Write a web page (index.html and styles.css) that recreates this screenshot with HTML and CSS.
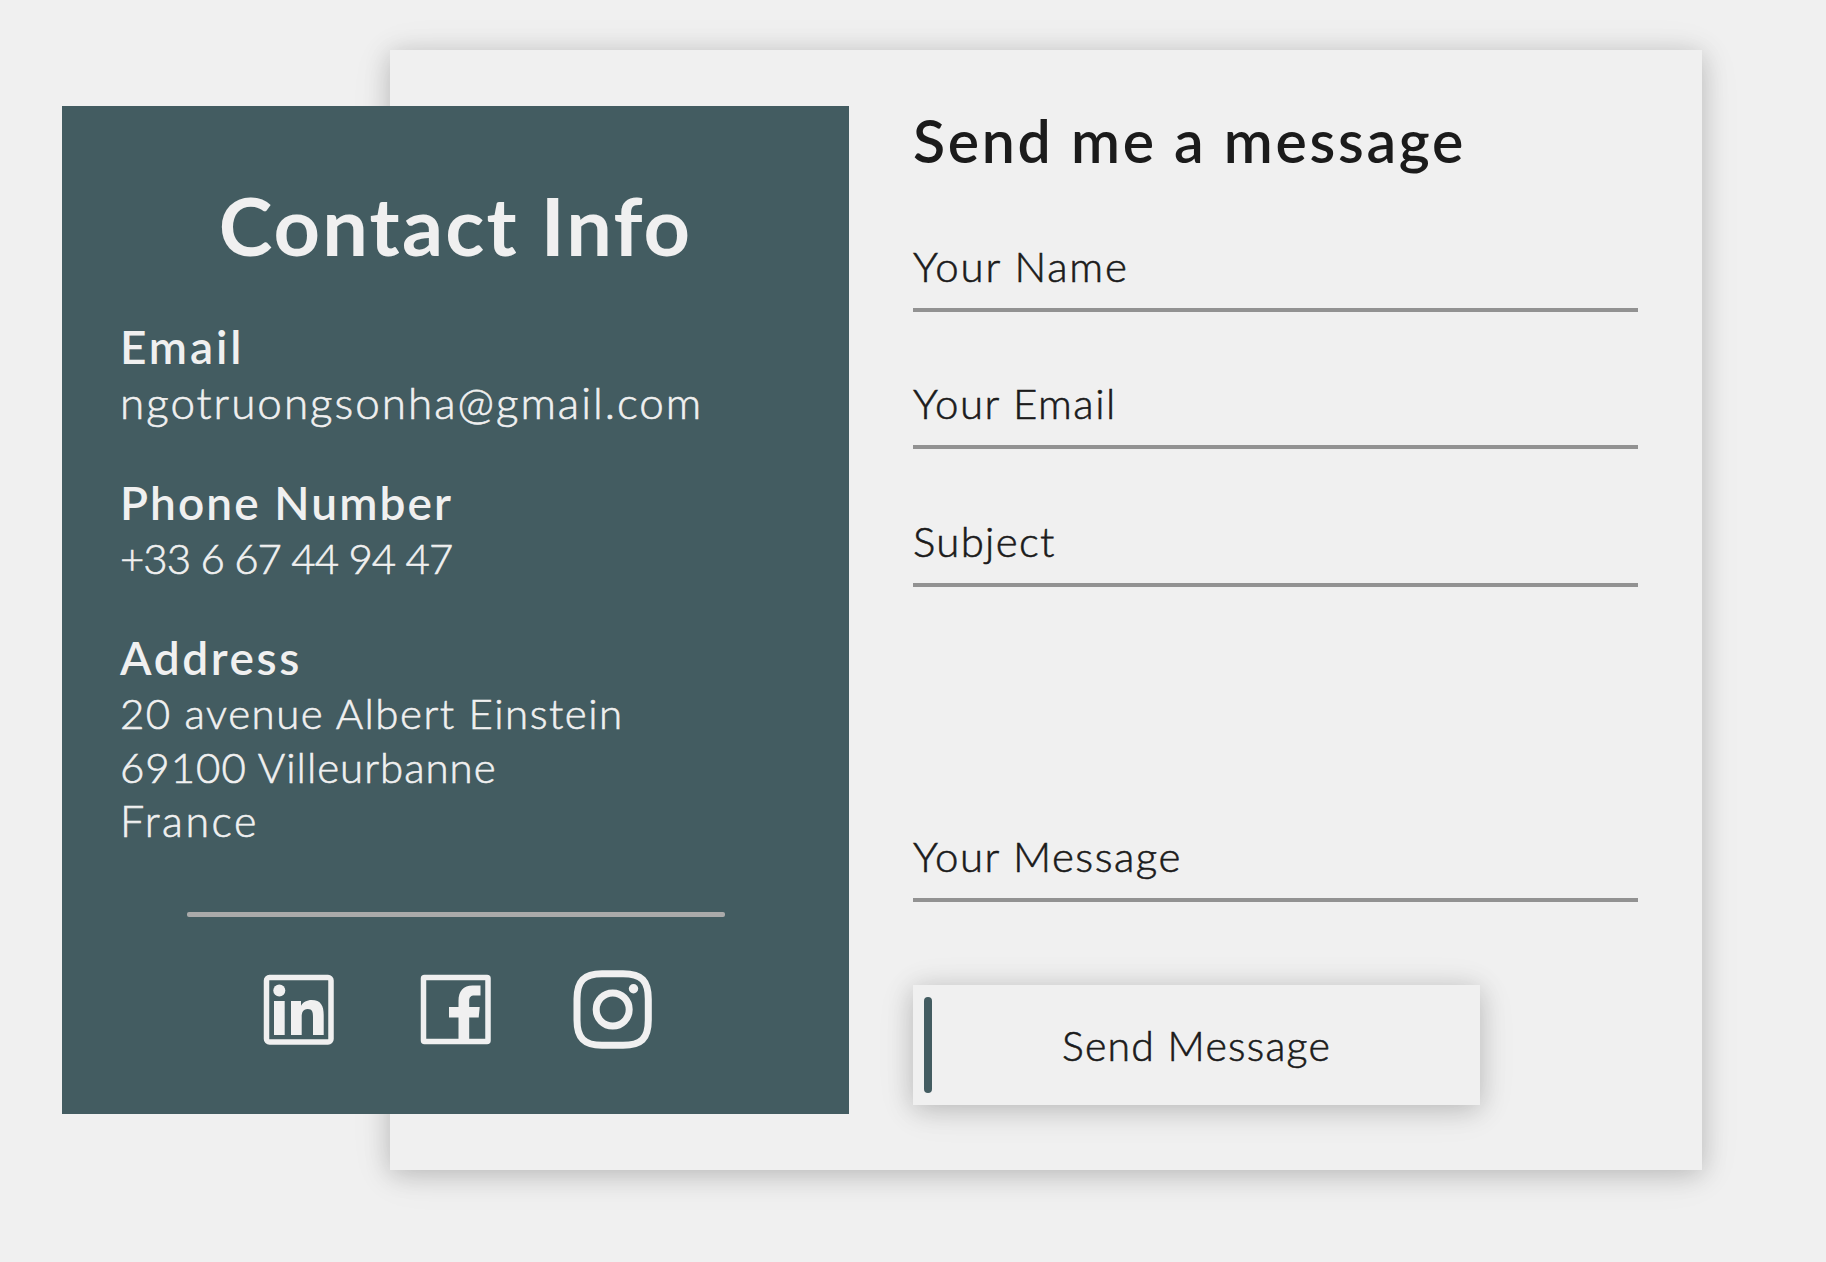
FILE: index.html
```html
<!DOCTYPE html>
<html lang="en">
  <head>
    <meta charset="utf-8" />
    <title>Contact</title>
    <link rel="stylesheet" href="styles.css">
  </head>

  <body>
    <div class="container">
      <div class="contact-info">
        <h1>Contact Info</h1>

        <div class="info-block">
          <h3 class="email-title">Email</h3>
          <p class="email-text">ngotruongsonha@gmail.com</p>
        </div>

        <div class="info-block phone">
          <h3 class="phone-title">Phone Number</h3>
          <p class="phone-text">+33 6 67 44 94 47</p>
        </div>

        <div class="info-block">
          <h3 class="address-title">Address</h3>
          <p class="street">20 avenue Albert Einstein</p>
          <p class="city">69100 Villeurbanne</p>
          <p class="country">France</p>
        </div>

        <div class="divider"></div>

        <div class="social">
          <a class="linkedin">
            <svg width="72" height="72" viewBox="0 0 72 72">
              <rect x="3.5" y="3.5" width="64.5" height="64.5" rx="3" fill="none" stroke="#f0f0f0" stroke-width="5.5" />
              <circle cx="16.3" cy="16.6" r="6" fill="#f0f0f0" />
              <path d="M11 27h10.7v34H11zM28 27h10v4.700c2-3.500 6-5.700 10.500-5.700C58 26 60.700 32 60.700 41v20H50V43c0-4.500-.5-8-5.300-8-4.900 0-6 3.800-6 8v18H28z" fill="#f0f0f0" />
            </svg>
          </a>
          <a class="facebook">
            <svg width="72" height="72" viewBox="0 0 72 72">
              <rect x="3.5" y="3.5" width="64.5" height="64" rx="1" fill="none" stroke="#f0f0f0" stroke-width="5.5" />
              <path d="M38.500 67V43.500h-9.500V33h9.500v-6c0-10 5-15.500 14-15.500h8V21.500h-6c-4 0-5.300 2-5.300 5V33h10.500l-1 10.500h-9.500V67z" fill="#f0f0f0" />
            </svg>
          </a>
          <a class="instagram">
            <svg width="80" height="80" viewBox="0 0 80 80">
              <path d="M29 3.700H50C69 3.700 75.300 11 75.300 29V50C75.300 69 68 75.300 50 75.300H29C11 75.300 4 68 4 50V29C4 11 11 3.700 29 3.700z" fill="none" stroke="#f0f0f0" stroke-width="7" />
              <circle cx="39.700" cy="39.500" r="16.500" fill="none" stroke="#f0f0f0" stroke-width="7" />
              <circle cx="60.500" cy="18.700" r="4.700" fill="#f0f0f0" />
            </svg>
          </a>
        </div>
      </div>

      <form class="message-form">
        <h2>Send me a message</h2>
        <div class="field name"><label>Your Name</label></div>
        <div class="field mail"><label>Your Email</label></div>
        <div class="field subject"><label>Subject</label></div>
        <div class="field message"><label>Your Message</label></div>
        <button type="button"><span>Send Message</span></button>
      </form>
    </div>
  </body>
</html>
```
FILE: styles.css
```css
* {
  box-sizing: border-box;
}

body {
  min-height: 100vh;
  margin: 0;
  padding: 50px 0 0 390px;
  background-color: #f0f0f0;
  color: #1b1b1b;
  font-family: Lato, sans-serif;
  font-weight: 300;
}

h1,
h2,
h3,
p {
  margin: 0;
  white-space: nowrap;
}

p,
label,
button {
  -webkit-text-stroke: 0.6px currentColor;
}

.container {
  display: flex;
  gap: 64px;
  width: 1312px;
  height: 1120px;
  padding: 56px 64px 56px 0;
  box-shadow: 0 4px 24px rgba(0, 0, 0, 0.18), 0 5px 40px rgba(0, 0, 0, 0.08);
}

/* the info card sticks out of the left side of the container */
.contact-info {
  flex: none;
  width: 787px;
  margin-left: -328px;
  padding: 71px 58px 0;
  background-color: #435c61;
  color: #f0f0f0;
}

.contact-info h1 {
  margin-bottom: 46px;
  font-size: 81px;
  line-height: 96px;
  font-weight: 700;
  letter-spacing: 2.2px;
  text-align: center;
}

.info-block {
  margin-bottom: 46px;
}

.info-block.phone {
  margin-bottom: 45px;
}

.info-block h3 {
  font-size: 46px;
  line-height: 56px;
  font-weight: 600;
}

.info-block p {
  font-size: 42px;
  line-height: 54px;
}

.info-block .email-title {
  font-size: 46px;
  letter-spacing: 2.9px;
}

.info-block .email-text {
  font-size: 44px;
  letter-spacing: 2px;
}

.phone-title {
  letter-spacing: 2.1px;
}

.phone-text {
  letter-spacing: -1px;
}

.info-block .address-title {
  font-size: 46px;
  letter-spacing: 2.6px;
}

.street {
  letter-spacing: 1.5px;
}

.city {
  letter-spacing: 1px;
}

.info-block .country {
  font-size: 43px;
  letter-spacing: 2.5px;
}

.divider {
  width: 538px;
  height: 5px;
  margin: 64px auto 0;
  border-radius: 2px;
  background-color: #aaa;
}

.social {
  display: flex;
  justify-content: center;
  align-items: center;
  gap: 85px;
  margin-top: 53px;
  padding-left: 4px;
}

.social svg {
  display: block;
}

.instagram {
  margin-left: -4px;
}

.message-form {
  width: 725px;
}

.message-form h2 {
  padding-top: 1px;
  font-size: 59px;
  line-height: 67px;
  font-weight: 600;
  letter-spacing: 2.7px;
}

.field {
  display: flex;
  align-items: flex-end;
  height: 138px;
  padding-bottom: 17px;
  border-bottom: 4px solid #929292;
  font-size: 42px;
  line-height: 50px;
  letter-spacing: 1.5px;
  white-space: nowrap;
}

.field.name {
  letter-spacing: 1.8px;
}

.field.subject {
  letter-spacing: 1.3px;
}

.field.mail {
  height: 137px;
}

.field.message {
  height: 315px;
}

button {
  display: flex;
  align-items: center;
  width: 567px;
  height: 120px;
  margin-top: 83px;
  padding: 0 11px;
  border: none;
  background-color: #f0f0f0;
  box-shadow: 0 4px 24px rgba(0, 0, 0, 0.18), 0 5px 40px rgba(0, 0, 0, 0.08);
  color: #1b1b1b;
  font-family: inherit;
  font-size: 41px;
  font-weight: 300;
  letter-spacing: 1.25px;
}

button::before {
  content: "";
  width: 8px;
  height: 96px;
  margin-right: -8px;
  border-radius: 4px;
  background-color: #435c61;
}

button span {
  flex: 1;
}
```
